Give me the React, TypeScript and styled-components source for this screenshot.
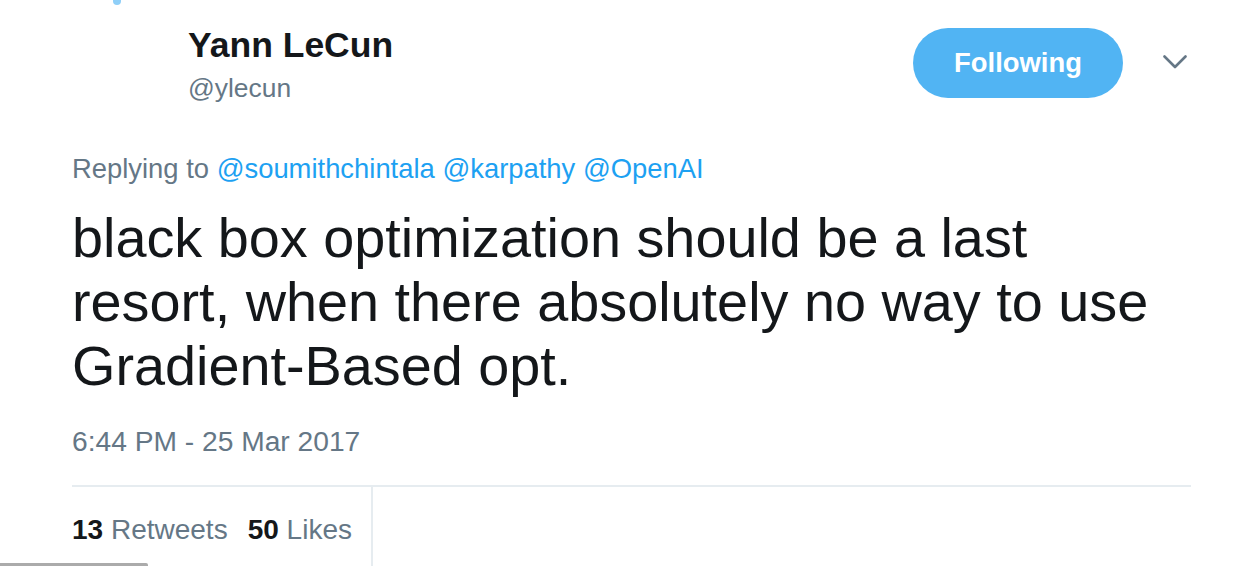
import styled, { createGlobalStyle } from 'styled-components';

const GlobalStyle = createGlobalStyle`
  html, body {
    margin: 0;
    padding: 0;
    background: #fff;
  }
  body {
    font-family: 'Liberation Sans', Arial, Helvetica, sans-serif;
    color: #14171a;
  }
`;

const Page = styled.div`
  position: relative;
  width: 1254px;
  height: 566px;
  overflow: hidden;
  background: #fff;
  display: flex;
  flex-direction: column;
  padding: 0 63px 0 72px;
  box-sizing: border-box;
`;

// bits of the surrounding page that peek in at the edges
const AvatarEdge = styled.div`
  position: absolute;
  left: 113px;
  top: -3px;
  width: 8px;
  height: 8px;
  border-radius: 50%;
  background: #8fcff8;
`;

const ScrollEdge = styled.div`
  position: absolute;
  left: 0;
  bottom: 0;
  width: 148px;
  height: 3px;
  border-radius: 0 2px 0 0;
  background: #ababab;
`;

const Header = styled.header`
  display: flex;
  align-items: flex-start;
  padding-top: 25px;
  padding-left: 116px;
`;

const NameBlock = styled.div`
  display: flex;
  flex-direction: column;
`;

const FullName = styled.div`
  font-size: 35.5px;
  line-height: 40px;
  font-weight: 700;
  color: #14171a;
`;

const ScreenName = styled.div`
  margin-top: 7px;
  font-size: 26.4px;
  line-height: 32px;
  color: #657786;
`;

const FollowButton = styled.button`
  margin: 3px 0 0 auto;
  width: 210px;
  height: 70px;
  border: 0;
  border-radius: 35px;
  background: #51b4f3;
  color: #fff;
  font-family: inherit;
  font-size: 27.4px;
  font-weight: 700;
  padding: 0;
  cursor: pointer;
`;

const Caret = styled.div`
  margin: 30px 4px 0 40px;
  width: 24px;
  height: 14px;
  display: flex;
`;

const ReplyLine = styled.div`
  margin-top: 49px;
  font-size: 27.4px;
  line-height: 32px;
  color: #657786;
`;

const Mention = styled.a`
  color: #1da1f2;
  text-decoration: none;
`;

const TweetText = styled.p`
  margin: 21px 0 0;
  font-size: 55.8px;
  line-height: 64px;
  color: #14171a;
`;

const Timestamp = styled.div`
  margin-top: 27px;
  font-size: 28.2px;
  line-height: 32px;
  color: #657786;
`;

const StatsBar = styled.div`
  margin-top: 28px;
  flex: 1;
  display: flex;
  border-top: 2px solid #e6ecf0;
`;

const StatsCell = styled.div`
  width: 301px;
  box-sizing: border-box;
  padding-top: 27px;
  border-right: 2px solid #e6ecf0;
  font-size: 28px;
  line-height: 32px;
  color: #657786;
  display: flex;
  gap: 20px;
`;

const Stat = styled.span`
  white-space: nowrap;
`;

const Count = styled.strong`
  color: #14171a;
  font-weight: 700;
`;

const ChevronDown = () => (
  <svg width="24" height="14" viewBox="0 0 24 14" fill="none">
    <path d="M1.5 1.5 L12 12 L22.5 1.5" stroke="#657786" strokeWidth="2.6" strokeLinecap="round" strokeLinejoin="round" />
  </svg>
);

const App = () => {
  return (
    <>
      <GlobalStyle />
      <Page>
        <AvatarEdge />
        <Header>
          <NameBlock>
            <FullName>Yann LeCun</FullName>
            <ScreenName>@ylecun</ScreenName>
          </NameBlock>
          <FollowButton>Following</FollowButton>
          <Caret>
            <ChevronDown />
          </Caret>
        </Header>
        <ReplyLine>
          Replying to <Mention>@soumithchintala</Mention> <Mention>@karpathy</Mention> <Mention>@OpenAI</Mention>
        </ReplyLine>
        <TweetText>
          black box optimization should be a last resort, when there absolutely no way to use Gradient-Based opt.
        </TweetText>
        <Timestamp>6:44 PM - 25 Mar 2017</Timestamp>
        <StatsBar>
          <StatsCell>
            <Stat>
              <Count>13</Count> Retweets
            </Stat>
            <Stat>
              <Count>50</Count> Likes
            </Stat>
          </StatsCell>
        </StatsBar>
        <ScrollEdge />
      </Page>
    </>
  );
};

export default App;
